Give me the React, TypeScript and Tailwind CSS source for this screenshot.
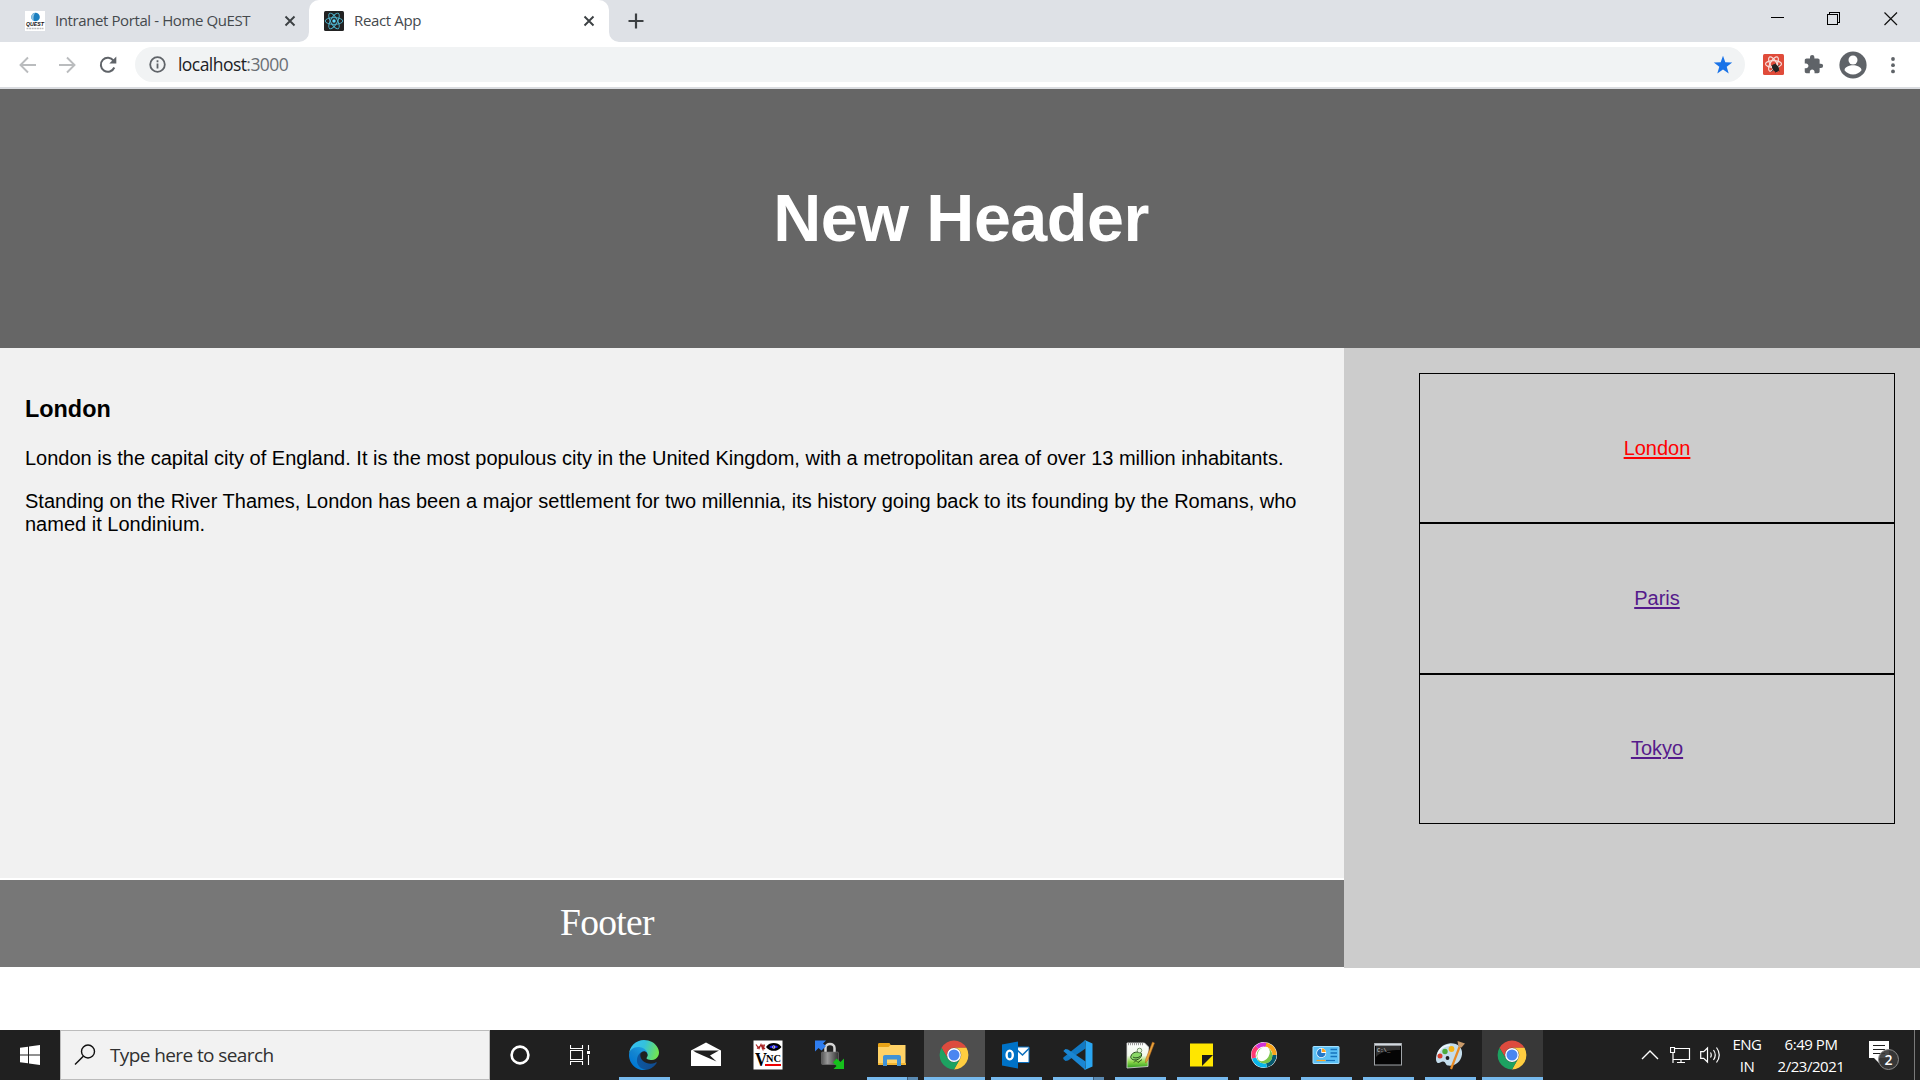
import React from "react";

type IconProps = { children: React.ReactNode; size?: number; className?: string };

const Svg = ({ children, size = 30, className = "" }: IconProps) => (
  <svg width={size} height={size} viewBox={`0 0 ${size} ${size}`} fill="none" className={`shrink-0 ${className}`}>
    {children}
  </svg>
);

const QuestFavicon = () => (
  <Svg size={20}>
    <rect width="20" height="20" fill="#fff" />
    <circle cx="10.500" cy="6" r="4.300" fill="#1b7fc0" />
    <path d="M6.400 6c0-2.400 1.700-4.200 4-4.300C8.800 3 8 7 9 10 7.300 9.500 6.400 8 6.400 6z" fill="#8fc3e2" />
    <text x="1" y="14.600" fontSize="5.400" fontWeight="900" fontStyle="italic" fill="#111" textLength="18" lengthAdjust="spacingAndGlyphs" fontFamily="Liberation Sans">QUEST</text>
    <path d="M1.500 17.500h17" stroke="#bbb" strokeWidth="1.500" strokeDasharray="2 .6" />
  </Svg>
);

const Orbits = ({ cx, cy, rx, ry, stroke, w }: { cx: number; cy: number; rx: number; ry: number; stroke: string; w: number }) => (
  <g stroke={stroke} strokeWidth={w}>
    <ellipse cx={cx} cy={cy} rx={rx} ry={ry} />
    <ellipse cx={cx} cy={cy} rx={rx} ry={ry} transform={`rotate(60 ${cx} ${cy})`} />
    <ellipse cx={cx} cy={cy} rx={rx} ry={ry} transform={`rotate(120 ${cx} ${cy})`} />
  </g>
);

const ReactFavicon = () => (
  <Svg size={20}>
    <rect width="20" height="20" rx="1.500" fill="#222" />
    <Orbits cx={10} cy={10} rx={8.8} ry={3.4} stroke="#50b8d2" w={0.9} />
    <circle cx="10" cy="10" r="1.700" fill="#61dafb" />
  </Svg>
);

const TabClose = () => (
  <Svg size={12}>
    <path d="M1.500 1.500l9 9M10.500 1.500l-9 9" stroke="#3c4043" strokeWidth="1.900" />
  </Svg>
);

const TopBar = () => (
  <div className="flex h-[42px] shrink-0 items-stretch bg-[#dee1e6]">
    <div className="flex w-[309px] items-center pl-[25px]">
      <QuestFavicon />
      <span className="ml-[10px] w-[229px] pb-[2px] text-[15px] tracking-[-0.4px] whitespace-nowrap text-[#45494d]">Intranet Portal - Home QuEST</span>
      <TabClose />
    </div>
    <div className="relative flex w-[300px] items-center rounded-t-[10px] bg-white pl-[15px]">
      <ReactFavicon />
      <span className="ml-[10px] w-[229px] pb-[2px] text-[15px] tracking-[-0.36px] whitespace-nowrap text-[#45494d]">React App</span>
      <TabClose />
      <svg className="absolute right-full bottom-0" width="10" height="10" viewBox="0 0 10 10">
        <path d="M10 0v10H0A10 10 0 0 0 10 0z" fill="#fff" />
      </svg>
      <svg className="absolute bottom-0 left-full" width="10" height="10" viewBox="0 0 10 10">
        <path d="M0 0v10h10A10 10 0 0 1 0 0z" fill="#fff" />
      </svg>
    </div>
    <div className="flex items-center pl-[19px]">
      <Svg size={16}>
        <path d="M8 .5v15M.5 8h15" stroke="#3c4043" strokeWidth="2.200" />
      </Svg>
    </div>
    <div className="ml-auto flex h-[37px] items-center pr-[22px]">
      <svg width="14" height="14" viewBox="0 0 14 14" shapeRendering="crispEdges"><rect y="5" width="13" height="1" fill="#000" /></svg>
      <svg className="ml-[42px]" width="14" height="14" viewBox="0 0 14 14" fill="none" stroke="#000" shapeRendering="crispEdges">
        <path d="M.5 2.500h10v10H.5zM2.500 2.500V.5h10v10h-2" />
      </svg>
      <svg className="ml-[43px]" width="14" height="14" viewBox="0 0 14 14" fill="none" stroke="#111" strokeWidth="1.200">
        <path d="M.5.5l12.500 12.500M13 .5L.5 13" />
      </svg>
    </div>
  </div>
);

const Toolbar = () => (
  <div className="flex h-[47px] shrink-0 items-center border-b-2 border-[#dadce0] bg-white">
    <div className="flex w-[135px] items-center gap-[20px] pl-[18px]">
      <Svg size={20}>
        <path d="M18 10H3M10 2.500L2.500 10l7.500 7.500" stroke="#babcbe" strokeWidth="1.900" />
      </Svg>
      <Svg size={20}>
        <path d="M1 10h16M9 2.500l7.500 7.500L9 17.500" stroke="#babcbe" strokeWidth="1.900" />
      </Svg>
      <Svg size={20}>
        <path d="M16.300 12.500A7 7 0 1 1 15.500 5.600" stroke="#5f6368" strokeWidth="2" />
        <path d="M18.300 1.600v7h-7z" fill="#5f6368" />
      </Svg>
    </div>
    <div className="flex h-[35px] w-[1610px] items-center rounded-full bg-[#f1f3f4] pr-[12px] pl-[14px]">
      <Svg size={17}>
        <circle cx="8.500" cy="8.500" r="7.300" stroke="#5f6368" strokeWidth="1.800" />
        <path d="M8.500 7.500v5M8.500 4.200v2" stroke="#5f6368" strokeWidth="1.800" />
      </Svg>
      <span className="ml-[12px] text-[17.5px] tracking-[-0.55px] text-[#202124]">
        localhost<span className="text-[#6b6f74]">:3000</span>
      </span>
      <Svg size={20} className="ml-auto">
        <path d="M10 .8l2.300 6.500 6.900.2-5.500 4.200 2 6.700L10 14.500l-5.700 3.900 2-6.700L.8 7.500l6.900-.2z" fill="#1a73e8" />
      </Svg>
    </div>
    <div className="ml-auto flex items-center pr-[24px]">
      <Svg size={21}>
        <rect width="21" height="21" rx="1.500" fill="#e04b3a" />
        <Orbits cx={10.5} cy={10} rx={8} ry={3.3} stroke="#f8dcd8" w={1.2} />
        <ellipse cx="12.500" cy="14" rx="3" ry="4.200" transform="rotate(-35 12.500 14)" fill="#222" />
        <path d="M8.500 11.500l8 5.500M16.500 11l-8 6.500M12.500 9.500v9" stroke="#222" strokeWidth=".9" />
      </Svg>
      <svg className="ml-[19px]" width="21" height="21" viewBox="0 0 24 24" fill="#5f6368">
        <path d="M20.500 11H19V7c0-1.100-.9-2-2-2h-4V3.500a2.500 2.500 0 0 0-5 0V5H4c-1.100 0-1.990.9-1.990 2v3.800H3.500c1.490 0 2.700 1.210 2.700 2.700s-1.210 2.700-2.700 2.700H2V20c0 1.100.9 2 2 2h3.800v-1.500c0-1.490 1.210-2.700 2.700-2.700s2.700 1.210 2.700 2.700V22H17c1.100 0 2-.9 2-2v-4h1.500a2.500 2.500 0 0 0 0-5z" />
      </svg>
      <Svg size={28} className="ml-[15px]">
        <circle cx="14" cy="14" r="13.600" fill="#5f6368" />
        <circle cx="14" cy="9" r="4.500" fill="#fff" />
        <path d="M5.500 19.300c0-3.300 5-5 8.500-5s8.500 1.700 8.500 5C20.600 21.900 17.500 23.500 14 23.500s-6.600-1.600-8.500-4.200z" fill="#fff" />
      </Svg>
      <svg className="ml-[23px]" width="6" height="18" viewBox="0 0 6 18" fill="#5f6368">
        <circle cx="3" cy="3" r="1.900" /><circle cx="3" cy="9.200" r="1.900" /><circle cx="3" cy="15.400" r="1.900" />
      </svg>
    </div>
  </div>
);

const cities = [
  { name: "London", cls: "text-[#ff0000]" },
  { name: "Paris", cls: "text-[#551a8b]" },
  { name: "Tokyo", cls: "text-[#551a8b]" },
];

const Page = () => (
  <div className="flex h-[941px] shrink-0 flex-col bg-white font-['Liberation_Sans',sans-serif] text-[20px] leading-[23px] text-black">
    <header className="flex h-[259px] shrink-0 items-center justify-center bg-[#666] pb-px pl-[2px] text-white">
      <h2 className="text-[66.5px] leading-[75px] font-bold tracking-[-0.5px]">New Header</h2>
    </header>
    <div className="flex h-[620px]">
      <div className="flex w-[1344px] flex-col">
        <article className="h-[530px] bg-[#f1f1f1] px-[25px] pt-[48px]">
          <h3 className="text-[23.4px] leading-[27px] font-bold">London</h3>
          <p className="mt-[24px]">
            London is the capital city of England. It is the most populous city in the United Kingdom, with a metropolitan area of over 13 million inhabitants.
          </p>
          <p className="mt-[20px]">
            Standing on the River Thames, London has been a major settlement for two millennia, its history going back to its founding by the Romans, who named it Londinium.
          </p>
        </article>
        <footer className="mt-[2px] h-[87px] bg-[#777] pt-[21px] pl-[560px] font-['Liberation_Serif',serif] text-[37.5px] leading-[43px] tracking-[-0.7px] text-white">
          Footer
        </footer>
      </div>
      <nav className="flex flex-1 flex-col bg-[#ccc] pt-[25px] pr-[25px] pl-[75px]">
        {cities.map((c) => (
          <div key={c.name} className="flex h-[150.4px] items-center justify-center border border-black">
            <a className={`underline decoration-2 underline-offset-2 ${c.cls}`}>{c.name}</a>
          </div>
        ))}
      </nav>
    </div>
  </div>
);

const Chrome = () => (
  <svg width="30" height="30" viewBox="-1 -1 50 50">
    {[["#dd4b3e", 0], ["#ffcd40", 120], ["#1da261", 240]].map(([fill, a]) => (
      <path key={a} fill={String(fill)} transform={`rotate(${a} 24 24)`} d="M24 12h20.780A24 24 0 0 0 3.220 12l10.390 18A12 12 0 0 1 24 12z" />
    ))}
    <circle cx="24" cy="24" r="11.500" fill="#fff" />
    <circle cx="24" cy="24" r="9.200" fill="#4a86f0" />
  </svg>
);

const Edge = () => (
  <svg width="30" height="30" viewBox="0 0 256 256">
    <defs>
      <linearGradient id="e1" x1="60" y1="177" x2="240" y2="177" gradientUnits="userSpaceOnUse"><stop stopColor="#0c59a4" /><stop offset="1" stopColor="#114a8b" /></linearGradient>
      <linearGradient id="e2" x1="150" y1="90" x2="40" y2="220" gradientUnits="userSpaceOnUse"><stop stopColor="#1b9de2" /><stop offset=".5" stopColor="#1384d0" /><stop offset="1" stopColor="#0078d4" /></linearGradient>
      <linearGradient id="e3" x1="20" y1="50" x2="240" y2="120" gradientUnits="userSpaceOnUse"><stop stopColor="#35c1f1" /><stop offset=".45" stopColor="#34c1dd" /><stop offset="1" stopColor="#70e454" /></linearGradient>
    </defs>
    <path fill="url(#e1)" d="M231 190.500c-3.400 1.800-6.900 3.400-10.500 4.700-11.500 4.300-23.600 6.500-35.900 6.500-47.300 0-88.500-32.500-88.500-74.300.1-11.400 6.400-21.900 16.400-27.300-42.800 1.800-53.800 46.400-53.800 72.500 0 74 68.100 81.400 82.800 81.400 7.900 0 19.800-2.300 27-4.600l1.300-.4c27.600-9.500 51-28.100 66.600-52.800 1.200-1.900.6-4.300-1.200-5.500-1.300-.8-2.900-.9-4.200-.2z" />
    <path fill="url(#e2)" d="M105.700 241.400c-8.900-5.500-16.600-12.800-22.700-21.300-26.300-36-18.400-86.500 17.600-112.800 3.800-2.700 7.700-5.200 11.900-7.200 3.100-1.500 8.400-4.100 15.500-4 10.100.1 19.600 4.900 25.700 13 4 5.400 6.300 11.900 6.400 18.700 0-.2 24.500-79.600-80-79.600-43.900 0-80 41.700-80 78.200-.2 19.300 4 38.500 12.100 56 27.600 58.800 94.800 87.600 156.400 67.100-21.100 6.600-44.100 3.700-62.900-8.100z" />
    <path fill="url(#e3)" d="M152.300 148.900c-.8 1-3.300 2.500-3.300 5.700 0 2.600 1.700 5.100 4.700 7.200 14.400 10 41.500 8.700 41.600 8.700 10.700 0 21.100-2.900 30.300-8.300 18.800-11 30.400-31.100 30.400-52.900.3-22.400-8-37.300-11.300-43.900C223.500 23.900 177.700 0 128 0 58 0 1 56.200 0 126.200c.5-36.500 36.800-66 80-66 3.500 0 23.500.3 42 10.100 16.300 8.600 24.900 18.900 30.800 29.200 6.200 10.700 7.300 24.100 7.300 29.500s-2.700 13.300-7.800 19.900z" />
  </svg>
);

const Mail = () => (
  <Svg>
    <path d="M0 10.500L15 2.500l15 8V26H0z" fill="#fff" />
    <path d="M2 10.500h26L19 15.500l6.500 6L5 12.500z" fill="#1f1f1f" />
  </Svg>
);

const Vnc = () => (
  <Svg>
    <rect x=".5" y=".5" width="29" height="29" fill="#fff" />
    <path d="M3 4.500l3 4 2-4 2 5 1.500-5M4 8.500l4-3 4 3.500M10 4.500l-1 4" stroke="#a22" strokeWidth="1.200" />
    <path d="M14.500 7c3-3.800 9.500-3.800 12.500 0-3 3.600-9.500 3.600-12.500 0z" fill="#1414e8" stroke="#000" strokeWidth="2.200" />
    <circle cx="20.800" cy="7" r="1.500" fill="#fff" />
    <circle cx="20.800" cy="7" r=".8" fill="#000" />
    <text x="2" y="25.500" fontSize="18" fontWeight="700" fontFamily="Liberation Serif" fill="#000" textLength="12" lengthAdjust="spacingAndGlyphs">V</text>
    <text x="13" y="22" fontSize="11" fontWeight="700" fontFamily="Liberation Serif" fill="#000" textLength="15" lengthAdjust="spacingAndGlyphs">NC</text>
    <path d="M12 25h16" stroke="#e00" strokeWidth="2" />
  </Svg>
);

const Lock = () => (
  <Svg>
    <defs>
      <linearGradient id="lk" x1="0" y1="0" x2="1" y2="0"><stop stopColor="#555" /><stop offset=".35" stopColor="#999" /><stop offset="1" stopColor="#333" /></linearGradient>
    </defs>
    <path d="M10.500 13V8c0-5.500 9-5.500 9 0v5" stroke="#d4d4d4" strokeWidth="2.500" />
    <rect x="6.500" y="12" width="17" height="12.500" rx="1" fill="url(#lk)" stroke="#777" strokeWidth=".6" />
    <path d="M0 .5h11L8 3.500l3 2.500-4.500 4.500L3.500 8 0 11.500z" fill="#2f7df0" />
    <path d="M29 18.500V29H18.500l3-3-3.500-3.500 3.500-4 4 3.500z" fill="#16c01c" />
  </Svg>
);

const Folder = () => (
  <Svg>
    <path d="M1 4.500C1 3.500 1.500 3 2.500 3h10l1.500 2.500H28V10H1z" fill="#e8a317" />
    <path d="M1 7h10.500l2-2H28.500v19.500H1z" fill="#ffd266" />
    <path d="M1 23h28v2H1z" fill="#f2b632" />
    <path d="M6 26V17c0-1.300.8-2 2-2h14c1.200 0 2 .7 2 2v9h-4v-6.500H10V26z" fill="#3f92d6" />
  </Svg>
);

const Outlook = () => (
  <Svg>
    <path d="M14 7h14v15.500H14z" fill="#fff" stroke="#0a6ebd" strokeWidth="1" />
    <path d="M16 10l5.500 5L28 8.500" stroke="#0a6ebd" strokeWidth="1.600" />
    <path d="M1 4.500L17 1.500v27L1 25.500z" fill="#0072c6" />
    <ellipse cx="8.700" cy="15" rx="3.100" ry="4.400" stroke="#fff" strokeWidth="2.400" />
  </Svg>
);

const VsCode = () => (
  <Svg>
    <path d="M22 .3L.3 17.500v1.500L2.500 21 5 20.500 22.500 8.500z" fill="#1179c4" />
    <path d="M.3 11L2.500 9 5 9.500 22.500 21.500l-.5 8.200z" fill="#1a86d3" />
    <path d="M21.500 0L29.500 3.500v23L21.500 30c-.8 0 1-1 1-2V2c0-1-1.200-2-1-2z" fill="#2aa6f2" />
  </Svg>
);

const NotepadPP = () => (
  <Svg>
    <defs><linearGradient id="np" x1="0" y1="0" x2="0" y2="1"><stop stopColor="#fff" /><stop offset=".5" stopColor="#f0f8ea" /><stop offset=".75" stopColor="#8fd94a" /><stop offset="1" stopColor="#2c9a20" /></linearGradient></defs>
    <path d="M2 3h17.500l4 4-.5 19.500L2 28z" fill="url(#np)" stroke="#ddd" strokeWidth=".8" />
    <path d="M3 4h15" stroke="#999" strokeWidth="2.500" strokeDasharray="1 1" />
    <path d="M6 16c1-4 7-5 10-3 2 2-1 7-6 7-3 0-5-2-4-4z" fill="#8ad868" stroke="#264d1a" />
    <circle cx="14.500" cy="10.500" r="2.300" fill="#e4f5da" stroke="#4a6d3e" strokeWidth=".7" />
    <path d="M8 17c2 1.500 6 1 8-1.500M9 22.500l2-2 2 2 4-3" stroke="#1c3d14" strokeWidth=".9" />
    <path d="M27.500 2l2 1L23 20l-2.500 3 .3-4z" fill="#e9a33a" stroke="#a85f1a" strokeWidth=".5" />
  </Svg>
);

const Sticky = () => (
  <Svg>
    <path d="M3 3.500h23v23H3z" fill="#ffe600" />
    <path d="M15 26V15h11z" fill="#1a1a1a" />
  </Svg>
);

const Webex = () => (
  <Svg>
    <circle cx="15" cy="15" r="13" fill="#fff" />
    <g strokeWidth="4.200">
      <path d="M15 4.500A10.500 10.500 0 0 1 25.500 15" stroke="#f9a51a" />
      <path d="M25.500 15a10.500 10.500 0 0 1-8 10.200" stroke="#07596f" />
      <path d="M17.500 25.200A10.500 10.500 0 0 1 5 18" stroke="#08b5e8" />
      <path d="M5 18a10.500 10.500 0 0 1 3-10.800" stroke="#ff3b73" />
      <path d="M8 7.200A10.500 10.500 0 0 1 17 4.700" stroke="#d433d6" />
    </g>
    <circle cx="15.500" cy="15.500" r="8" fill="#7cc64a" />
    <ellipse cx="14.500" cy="14" rx="5.700" ry="7.800" transform="rotate(32 14.500 14)" fill="#fff" />
  </Svg>
);

const ControlPanel = () => (
  <Svg>
    <rect x="2" y="6.500" width="26" height="17" rx=".5" fill="#5cc0f5" stroke="#a5e0ff" />
    <circle cx="10.300" cy="13" r="4.900" fill="#fff" />
    <path d="M10.300 13V8.700A4.300 4.300 0 1 0 14.600 13z" fill="#2478c8" />
    <path d="M11 12V8.500a4 4 0 0 1 3.800 3.500z" fill="#ffa51f" />
    <path d="M19.500 9.500h6.500M19.500 13h6.500M19.500 16.500h6.500" stroke="#1673bd" strokeWidth="1.500" />
    <path d="M5.500 20.500h9" stroke="#ffa51f" strokeWidth="1.300" /><path d="M15 20.500h9" stroke="#1673bd" strokeWidth="1.200" />
  </Svg>
);

const Terminal = () => (
  <Svg>
    <rect x="1.500" y="3.500" width="27" height="21.500" fill="#050505" stroke="#a0a4a8" />
    <path d="M2 4.700h26" stroke="#d4dae0" strokeWidth="2" />
    <path d="M3 6h24v4C17 10 8 11 3 17z" fill="#303030" />
    <text x="4" y="11.500" fontSize="5.500" fontFamily="Liberation Mono" fill="#ddd">C:\_</text>
  </Svg>
);

const Paint = () => (
  <Svg>
    <path d="M14 3.500c8-1 14 4 13 11-1 8-8 12-14 11-3-.5-2-4-5-4-2 0-3 2-5 1.500-2-.6-2.500-4-1.500-8C3 9 8 4.200 14 3.500z" fill="#c4ddec" />
    <path d="M3 15c1-6 6-9.500 12-10" stroke="#f2f9fd" strokeWidth="1.500" />
    <circle cx="5" cy="16" r="2.500" fill="#d8402e" /><circle cx="10" cy="11.500" r="2.700" fill="#4cab3c" /><circle cx="16.500" cy="9" r="2.900" fill="#f5b517" />
    <circle cx="12.500" cy="18" r="1.900" fill="#1f1f1f" />
    <path d="M24.500 7L16 29" stroke="#e88a24" strokeWidth="2.200" />
    <path d="M22.500 1l7.500 2.500-3.500 4-3-.5z" fill="#c89a6a" />
  </Svg>
);

const apps: { icon: React.ReactNode; state: "open" | "multi" | "idle" | "active" | "hover" }[] = [
  { icon: <Edge />, state: "open" },
  { icon: <Mail />, state: "idle" },
  { icon: <Vnc />, state: "idle" },
  { icon: <Lock />, state: "idle" },
  { icon: <Folder />, state: "multi" },
  { icon: <Chrome />, state: "active" },
  { icon: <Outlook />, state: "open" },
  { icon: <VsCode />, state: "multi" },
  { icon: <NotepadPP />, state: "open" },
  { icon: <Sticky />, state: "open" },
  { icon: <Webex />, state: "open" },
  { icon: <ControlPanel />, state: "open" },
  { icon: <Terminal />, state: "open" },
  { icon: <Paint />, state: "open" },
  { icon: <Chrome />, state: "hover" },
];

const cellBg = { open: "", multi: "", idle: "", active: "bg-[#4e4e4e]", hover: "bg-[#383838]" };

const Taskbar = () => (
  <div className="flex h-[50px] shrink-0 bg-[#202020] text-white">
    <div className="flex w-[60px] items-center justify-center">
      <Svg size={20}>
        <path d="M0 2.800L8 1.700v7.800H0zM9 1.500L20 0v9.500H9zM0 10.500h8v7.800L0 17.200zM9 10.500h11V20L9 18.500z" fill="#fff" />
      </Svg>
    </div>
    <div className="flex w-[430px] items-center border border-[#bcbcbc] bg-[#f2f2f2] pl-[13px]">
      <Svg size={22}>
        <circle cx="14" cy="7.500" r="6.500" stroke="#111" strokeWidth="1.400" />
        <path d="M9.300 12.300L1 20.500" stroke="#111" strokeWidth="1.500" />
      </Svg>
      <span className="ml-[14px] text-[19px] tracking-[-0.6px] text-[#303030]">Type here to search</span>
    </div>
    <div className="flex w-[60px] items-center justify-center">
      <Svg size={20}><circle cx="10" cy="10" r="8.400" stroke="#fff" strokeWidth="2.600" /></Svg>
    </div>
    <div className="flex w-[63px] items-center pl-[20px]">
      <Svg size={20}>
        <path d="M.5 0v3.500h12V0M.5 20v-3.500h12V20M.5 5.500h12v9H.5zM18.500 0v5M18.500 10v10" stroke="#fff" strokeWidth="1.100" />
        <rect x="17" y="6" width="3" height="3" fill="#fff" />
      </Svg>
    </div>
    {apps.map((a, i) => (
      <div key={i} className="flex w-[62px] flex-col items-end">
        <div className={`flex h-[47px] w-[61px] items-center pt-[3px] pl-[15px] ${cellBg[a.state]}`}>{a.icon}</div>
        {a.state === "open" && <div className="mr-[5px] h-[3px] w-[51px] bg-[#76b9ed]" />}
        {a.state === "multi" && (
          <div className="mr-[5px] flex h-[3px] w-[51px] bg-[#76b9ed]"><div className="ml-auto w-[11px] border-l border-[#3c5c78] bg-[#5a8ab2]" /></div>
        )}
        {(a.state === "active" || a.state === "hover") && <div className="h-[3px] w-[61px] bg-[#76b9ed]" />}
      </div>
    ))}
    <div className="ml-auto flex items-center">
      <Svg size={18}><path d="M1 13l8-8 8 8" stroke="#fff" strokeWidth="1.400" /></Svg>
      <Svg size={22} className="ml-[11px]">
        <path d="M5 4.500h14.500v11H3V9M11 15.500V18M7 18.500h8M3 9v10M.5 3.500h4v5h-4z" stroke="#fff" strokeWidth="1.200" />
      </Svg>
      <Svg size={22} className="ml-[8px]">
        <path d="M.7 7.700h3L7.500 4v14L3.700 14.300h-3z" stroke="#fff" strokeWidth="1.200" />
        <path d="M10.500 8.500q1.500 2.500 0 5M13.500 6q3.500 5 0 10M16.500 3.500q5.500 7.500 0 15" stroke="#fff" strokeWidth="1.200" />
      </Svg>
      <div className="ml-[4px] w-[42px] text-center text-[15px] leading-[22px] tracking-[-0.5px]">
        <div>ENG</div>
        <div>IN</div>
      </div>
      <div className="ml-[3px] w-[80px] pb-px text-center text-[15px] leading-[22px] tracking-[-0.45px] whitespace-nowrap">
        <div>6:49 PM</div>
        <div>2/23/2021</div>
      </div>
      <svg className="ml-[18px]" width="32" height="32" viewBox="0 0 32 32" fill="none">
        <path d="M0 2h20v17H10v5l-5-5H0z" fill="#fff" />
        <path d="M4 6.500h12M4 10.500h12M4 14.500h12" stroke="#202020" strokeWidth="1.100" />
        <circle cx="19.500" cy="20.500" r="10" fill="#3a3a3a" fillOpacity=".92" stroke="#8a8a8a" />
        <text x="19.500" y="25.500" textAnchor="middle" fontSize="14" fontWeight="600" fill="#fff">2</text>
      </svg>
      <div className="mr-[5px] ml-[13px] h-[50px] w-px bg-[#7a7a7a]" />
    </div>
  </div>
);

export default function App() {
  return (
    <div className="flex h-[1080px] w-[1920px] flex-col overflow-hidden bg-white font-['Open_Sans','Noto_Sans',sans-serif]">
      <TopBar />
      <Toolbar />
      <Page />
      <Taskbar />
    </div>
  );
}
